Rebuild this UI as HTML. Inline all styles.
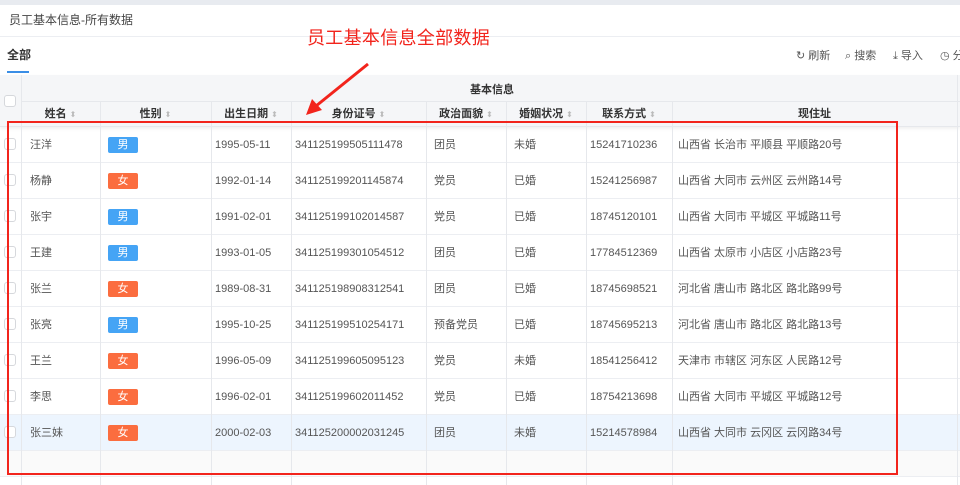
<!DOCTYPE html>
<html><head><meta charset="utf-8"><style>
*{margin:0;padding:0;box-sizing:border-box}
body{width:960px;height:485px;overflow:hidden;background:#fff;font-family:"Liberation Sans","Noto Sans CJK SC",sans-serif;font-size:11px;color:#555;position:relative}
.a{position:absolute}
.top{left:0;top:0;width:960px;height:5px;background:#e8ebf0}
.title{left:9px;top:11px;font-size:12px;color:#444}
.hl{left:0;top:36px;width:960px;height:1px;background:#eceef2}
.tab{left:7px;top:46px;font-size:12px;color:#333;font-weight:bold}
.ul{left:7px;top:71px;width:22px;height:2px;background:#3a8ee6}
.tools{top:47px;font-size:11px;color:#555;white-space:nowrap}
.gh{left:0;top:75px;width:960px;height:52px;background:#f5f6f8;border-bottom:1px solid #e6e8ec;box-shadow:0 2px 3px rgba(0,0,0,.06)}
.vl{width:1px;background:#e6e8ec}
.hd{top:101px;height:26px;line-height:27px;font-size:11px;color:#333;text-align:center;font-weight:bold;white-space:nowrap}
.si{color:#bbb;font-size:8px;font-weight:normal}
.row{left:0;width:960px;height:36px;border-bottom:1px solid #eceef2}
.c{position:absolute;top:1px;height:35px;line-height:35px;font-size:11px;color:#555;white-space:nowrap}
.cb{position:absolute;left:4px;top:11px;width:12px;height:12px;border:1px solid #d6d8dc;border-radius:3px;background:#fff}
.bd{position:absolute;left:108px;top:10px;width:30px;height:16px;border-radius:2px;color:#fff;text-align:center;line-height:16px;font-size:11px}
.m{background:#45a4f5}.f{background:#fb6d3f}
</style></head><body>
<div class="a top"></div>
<div class="a title">员工基本信息-所有数据</div>
<div class="a hl"></div>
<div class="a tab">全部</div>
<div class="a ul"></div>
<div class="a tools" style="left:796px">↻ 刷新</div>
<div class="a tools" style="left:845px">⌕ 搜索</div>
<div class="a tools" style="left:893px">⤓ 导入</div>
<div class="a tools" style="left:940px">◷ 分</div>
<div class="a gh"></div>
<div class="a" style="left:21px;top:101px;width:939px;height:1px;background:#e6e8ec"></div>
<div class="a" style="left:470px;top:81px;font-size:11px;font-weight:bold;color:#333">基本信息</div>
<div class="a cb" style="left:4px;top:95px;position:absolute"></div>
<div id="rows"></div>
<div class="a hd" style="left:21px;width:79px">姓名 <span class="si">⬍</span></div>
<div class="a hd" style="left:100px;width:111px">性别 <span class="si">⬍</span></div>
<div class="a hd" style="left:211px;width:80px">出生日期 <span class="si">⬍</span></div>
<div class="a hd" style="left:291px;width:135px">身份证号 <span class="si">⬍</span></div>
<div class="a hd" style="left:426px;width:80px">政治面貌 <span class="si">⬍</span></div>
<div class="a hd" style="left:506px;width:80px">婚姻状况 <span class="si">⬍</span></div>
<div class="a hd" style="left:586px;width:86px">联系方式 <span class="si">⬍</span></div>
<div class="a hd" style="left:672px;width:285px">现住址</div>
<script>
var d=[["汪洋","男","1995-05-11","341125199505111478","团员","未婚","15241710236","山西省 长治市 平顺县 平顺路20号"],
["杨静","女","1992-01-14","341125199201145874","党员","已婚","15241256987","山西省 大同市 云州区 云州路14号"],
["张宇","男","1991-02-01","341125199102014587","党员","已婚","18745120101","山西省 大同市 平城区 平城路11号"],
["王建","男","1993-01-05","341125199301054512","团员","已婚","17784512369","山西省 太原市 小店区 小店路23号"],
["张兰","女","1989-08-31","341125198908312541","团员","已婚","18745698521","河北省 唐山市 路北区 路北路99号"],
["张亮","男","1995-10-25","341125199510254171","预备党员","已婚","18745695213","河北省 唐山市 路北区 路北路13号"],
["王兰","女","1996-05-09","341125199605095123","党员","未婚","18541256412","天津市 市辖区 河东区 人民路12号"],
["李思","女","1996-02-01","341125199602011452","党员","已婚","18754213698","山西省 大同市 平城区 平城路12号"],
["张三妹","女","2000-02-03","341125200002031245","团员","未婚","15214578984","山西省 大同市 云冈区 云冈路34号"]];
var h="",xs=[30,null,215,295,434,514,590,678];
d.forEach(function(r,i){var y=127+i*36;h+='<div class="a row" style="top:'+y+'px;'+(i==8?'background:#edf5fe':'')+'"><div class="cb"></div>';
r.forEach(function(v,j){if(j==1)h+='<div class="bd '+(v=="男"?"m":"f")+'">'+v+'</div>';else h+='<div class="c" style="left:'+xs[j]+'px">'+v+'</div>';});h+='</div>';});
h+='<div class="a row" style="top:451px;height:26px;background:#fafafa"></div>';
[21,100,211,291,426,506,586,672,957].forEach(function(x){h+='<div class="a vl" style="left:'+x+'px;top:'+(x==21||x==957?75:101)+'px;height:'+(x==21||x==957?410:384)+'px"></div>';});
document.getElementById("rows").innerHTML=h;
</script>
<div class="a" style="left:7px;top:121px;width:891px;height:354px;border:2px solid #f2241c"></div>
<div class="a" style="left:307px;top:24px;font-size:18px;color:#f2241c;letter-spacing:0.3px">员工基本信息全部数据</div>
<svg class="a" style="left:0;top:0" width="960" height="485"><line x1="368" y1="64" x2="316" y2="106" stroke="#f2241c" stroke-width="3"/><polygon points="306,115 312,99 322,110" fill="#f2241c"/></svg>
</body></html>
